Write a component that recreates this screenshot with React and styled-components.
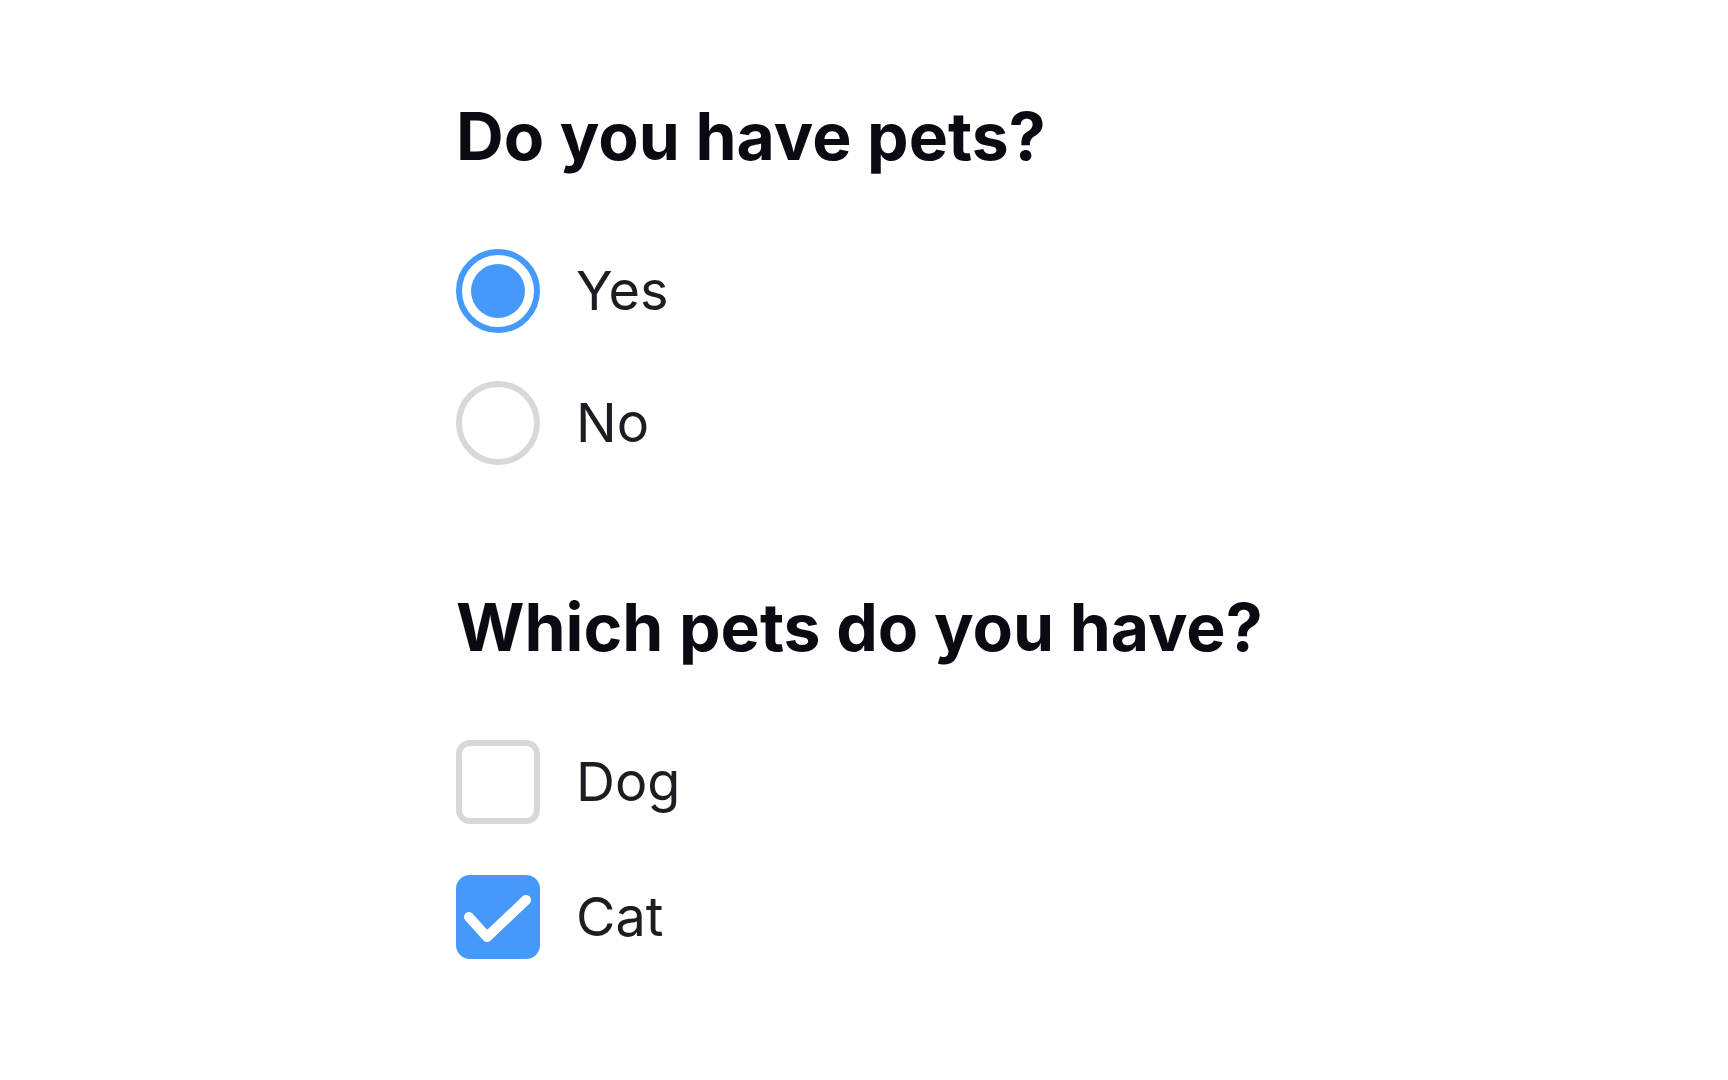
import React, { useState } from "react";
import styled, { createGlobalStyle } from "styled-components";

const GlobalStyle = createGlobalStyle`
  body {
    margin: 0;
    background: #ffffff;
    font-family: Inter, "Noto Sans", sans-serif;
  }
`;

const Page = styled.div`
  padding: 103px 0 0 456px;
  display: flex;
  flex-direction: column;
  gap: 129px;
`;

const Section = styled.section`
  display: flex;
  flex-direction: column;
  gap: 80px;
`;

const Heading = styled.h2`
  margin: 0;
  font-size: 66px;
  line-height: 1;
  font-weight: 700;
  letter-spacing: 0;
  color: #0a0a12;
`;

const Options = styled.div`
  display: flex;
  flex-direction: column;
  gap: ${(p) => p.$gap}px;
`;

const Option = styled.label`
  display: flex;
  align-items: center;
  gap: 36px;
  height: 84px;
  cursor: pointer;
  font-size: 54px;
  line-height: 1;
  color: #1c1c22;
`;

const Radio = styled.span`
  box-sizing: border-box;
  width: 84px;
  height: 84px;
  border-radius: 50%;
  border: 6px solid ${(p) => (p.$on ? "#4499fb" : "#d8d8db")};
  display: flex;
  align-items: center;
  justify-content: center;

  &::after {
    content: "";
    width: 54px;
    height: 54px;
    border-radius: 50%;
    background: #4499fb;
    display: ${(p) => (p.$on ? "block" : "none")};
  }
`;

const Box = styled.span`
  box-sizing: border-box;
  width: 84px;
  height: 84px;
  border-radius: 14px;
  border: ${(p) => (p.$on ? "none" : "6px solid #d8d8db")};
  background: ${(p) => (p.$on ? "#4499fb" : "#ffffff")};
  display: flex;

  svg {
    width: 84px;
    height: 84px;
  }
`;

const Check = () => (
  <svg viewBox="0 0 84 84">
    <polyline
      points="13,42 31,62 70,25"
      fill="none"
      stroke="#ffffff"
      strokeWidth="10"
      strokeLinecap="round"
      strokeLinejoin="round"
    />
  </svg>
);

export default function App() {
  const [hasPets, setHasPets] = useState("yes");
  const [pets, setPets] = useState({ dog: false, cat: true });

  return (
    <>
      <GlobalStyle />
      <Page>
        <Section>
          <Heading>Do you have pets?</Heading>
          <Options $gap={48}>
            <Option onClick={() => setHasPets("yes")}>
              <Radio $on={hasPets === "yes"} />
              Yes
            </Option>
            <Option onClick={() => setHasPets("no")}>
              <Radio $on={hasPets === "no"} />
              No
            </Option>
          </Options>
        </Section>
        <Section>
          <Heading>Which pets do you have?</Heading>
          <Options $gap={51}>
            <Option onClick={() => setPets({ ...pets, dog: !pets.dog })}>
              <Box $on={pets.dog}>{pets.dog && <Check />}</Box>
              Dog
            </Option>
            <Option onClick={() => setPets({ ...pets, cat: !pets.cat })}>
              <Box $on={pets.cat}>{pets.cat && <Check />}</Box>
              Cat
            </Option>
          </Options>
        </Section>
      </Page>
    </>
  );
}
